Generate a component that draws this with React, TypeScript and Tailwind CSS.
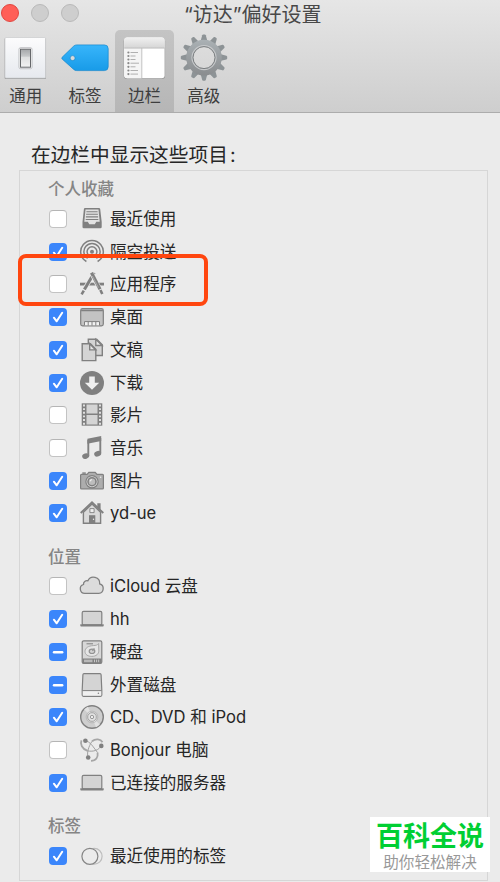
import React from "react";

type CheckState = "on" | "off" | "mixed";

interface Item {
  label: string;
  state: CheckState;
  icon: React.ReactNode;
}

const DARK = "#808080";
const LIGHT = "#d4d4d4";

function Icon({ children }: { children: React.ReactNode }) {
  return (
    <svg
      viewBox="0 0 24 24"
      className="ml-[13px] h-6 w-6 shrink-0 overflow-visible"
      fill="none"
      stroke={DARK}
      strokeWidth="1.2"
    >
      {children}
    </svg>
  );
}

const laptop = (
  <Icon>
    <rect x="2.2" y="4.3" width="19.6" height="13.5" rx="1.4" fill={LIGHT} />
    <path d="M.3 17.2h23.4v1.6q0 .8-.8.8H1.1q-.8 0-.8-.8z" fill={DARK} stroke="none" />
  </Icon>
);

const favorites: Item[] = [
  {
    label: "最近使用",
    state: "off",
    icon: (
      <Icon>
        <path d="M5.1 1h13.8q1.1 0 1.3 1.1l1.5 13V20q0 1.3-1.3 1.3H3.8q-1.3 0-1.3-1.3v-4.9L3.9 2.1Q4 1 5.1 1z" fill={DARK} stroke="none" />
        <path d="M5.5 2.4h13l1.2 12.4h-3.4l-1.5 2.5H9.3l-1.5-2.5H4.3z" fill="#e2e2e2" stroke="none" />
        <path d="M6.4 4.7h11.2M6.1 7.3h11.8M5.9 9.9h12.2M5.7 12.5h12.6" strokeWidth="1.1" />
      </Icon>
    ),
  },
  {
    label: "隔空投送",
    state: "on",
    icon: (
      <Icon>
        <circle cx="12" cy="11.7" r="2" fill={DARK} stroke="none" />
        <path d="M9.2 15.7a4.9 4.9 0 1 1 5.6 0M7.6 18.4a8.1 8.1 0 1 1 8.8 0M6.4 21.5a11.3 11.3 0 1 1 11.2 0" strokeWidth="1.5" />
      </Icon>
    ),
  },
  {
    label: "应用程序",
    state: "off",
    icon: (
      <Icon>
        <path d="M0 12.1h24" strokeWidth="2.8" />
        <path d="M14 .9 4.3 17.6" stroke="#ebebeb" strokeWidth="4.6" />
        <path d="M14.2.8 4.4 17.6" strokeWidth="3" />
        <path d="M3.8 18.6 1.6 22.4" strokeWidth="2.6" />
        <path d="m11.5 1 8.3 16.2" stroke="#ebebeb" strokeWidth="4.6" />
        <path d="M11.5.8 20 17.2" strokeWidth="3.2" />
        <path d="m20.4 18 1.9 4" strokeWidth="2.6" />
        <path d="m12.4 4 6 11.6" stroke="#b5b5b5" strokeWidth=".8" />
      </Icon>
    ),
  },
  {
    label: "桌面",
    state: "on",
    icon: (
      <Icon>
        <rect x=".7" y="3.7" width="22.6" height="17.2" rx="1.8" fill="#c3c3c3" />
        <path d="M1.1 5.5h21.8" strokeWidth="1.5" />
        <path d="M4.5 20.3v-3.7h15v3.7z" fill="#f1f1f1" stroke="none" />
        <path d="M4.5 20.3v-3.7h15v3.7M8.2 16.6v4M12 16.6v4M15.8 16.6v4" strokeWidth="1" />
      </Icon>
    ),
  },
  {
    label: "文稿",
    state: "on",
    icon: (
      <Icon>
        <path d="M8.3 17.5V1.2h8.4l5.6 5.5v10.8z" fill={LIGHT} strokeWidth="1.4" />
        <path d="M15.8 1.3v6.2h6.3z" fill="#e6e6e6" strokeWidth="1.4" />
        <path d="M2.2 22.6V5.7h8.2l5.4 5.5v11.4z" fill={LIGHT} strokeWidth="1.4" />
        <path d="M9.7 5.8v6.1h6z" fill="#e6e6e6" strokeWidth="1.4" />
      </Icon>
    ),
  },
  {
    label: "下载",
    state: "on",
    icon: (
      <Icon>
        <circle cx="12" cy="12" r="12" fill={DARK} stroke="none" />
        <path d="M9.2 5.5h5.6v6.2h4.4L12 18.8l-7.2-7.1h4.4z" fill="#efefef" stroke="none" />
      </Icon>
    ),
  },
  {
    label: "影片",
    state: "off",
    icon: (
      <Icon>
        <path d="M1.7.3h20.6v22.4H1.7z" fill={DARK} stroke="none" />
        <path d="M6.5 1.5h11v9h-11zM6.5 12h11v9.4h-11z" fill={LIGHT} stroke="none" />
        <path d="M4 1.5V22M20 1.5V22" stroke="#e4e4e4" strokeWidth="1.9" strokeDasharray="1.9 1.75" />
      </Icon>
    ),
  },
  {
    label: "音乐",
    state: "off",
    icon: (
      <Icon>
        <path d="M7.4 2.7 21.2 0v5L7.4 7.8z" fill={DARK} stroke="none" />
        <path d="M8.3 4v15.7M20.3 2v15.1" strokeWidth="1.9" />
        <ellipse cx="5.7" cy="20.1" rx="3.6" ry="2.7" transform="rotate(-20 5.7 20.1)" fill={DARK} stroke="none" />
        <ellipse cx="17.7" cy="17.7" rx="3.6" ry="2.7" transform="rotate(-20 17.7 17.7)" fill={DARK} stroke="none" />
      </Icon>
    ),
  },
  {
    label: "图片",
    state: "on",
    icon: (
      <Icon>
        <path d="M1.5 5.4h5.6l1.7-2.1h6.4l1.8 2.1h5.5q.9 0 .9.9v12.6q0 .9-.9.9h-21q-.9 0-.9-.9V6.3q0-.9.9-.9z" fill="#adadad" />
        <path d="M2.3 4.1h3.5" strokeWidth="1.5" />
        <circle cx="12" cy="12.7" r="6.1" fill="#dedede" />
        <circle cx="12" cy="12.7" r="4" fill="#bdbdbd" strokeWidth="1.6" />
        <path d="M10 12.4a2.2 2.2 0 0 1 2-1.8" stroke="#eee" />
        <circle cx="20.6" cy="8.2" r=".8" fill="#eee" stroke="none" />
      </Icon>
    ),
  },
  {
    label: "yd-ue",
    state: "on",
    icon: (
      <Icon>
        <path d="M3.4 11.2 12 3l8.6 8.2v11H3.4z" fill="#dadada" strokeWidth="1.4" />
        <path d="M17.3 2.3h3.3v7l-3.3-3.2z" fill={DARK} stroke="none" />
        <path d="M.7 12 12 1.4 23.3 12" strokeWidth="1.9" />
        <path d="M9.9 7.6h4.2v4H9.9z" fill="#efefef" strokeWidth=".9" />
        <path d="M9 14.2h6.3v8.4H9z" fill={DARK} stroke="none" />
        <circle cx="13.5" cy="18.3" r=".7" fill="#eee" stroke="none" />
      </Icon>
    ),
  },
];

const locations: Item[] = [
  {
    label: "iCloud 云盘",
    state: "off",
    icon: (
      <Icon>
        <path d="M5 19.3a4.5 4.5 0 0 1-1.5-8.8 3.5 3.5 0 0 1 4.4-3.7 6.2 6.2 0 0 1 11.8 3.1 4.8 4.8 0 0 1-.9 9.4z" fill="#dcdcdc" strokeWidth="1.3" />
      </Icon>
    ),
  },
  { label: "hh", state: "on", icon: laptop },
  {
    label: "硬盘",
    state: "mixed",
    icon: (
      <Icon>
        <rect x="2.2" y=".8" width="19.6" height="22.6" rx="1.5" fill="#d8d8d8" />
        <path d="M2.5 18.5h19v4.7h-19z" fill={DARK} stroke="none" />
        <path d="M4 19.6h8.5v2.6H4z" fill="#b9b9b9" stroke="none" />
        <path d="M14.5 19.6v2.6M16.6 19.6v2.6M18.7 19.6v2.6" stroke="#d0d0d0" strokeWidth=".9" />
        <path d="M6.5 3.8H13" strokeWidth="1" />
        <path d="M18.6 3.5C17.2 5.3 16 5.4 13.2 5.6 8.2 5.9 5 8 5 11.4c0 3.3 3 5 6.8 5 4.6 0 7.2-2.6 7-6.2z" fill="#e6e6e6" stroke="#a2a2a2" strokeWidth=".9" />
        <ellipse cx="12" cy="11.3" rx="2.8" ry="2.2" fill="#d2d2d2" stroke="#929292" />
        <path d="m12.4 11 2-2.6" stroke="#929292" />
      </Icon>
    ),
  },
  {
    label: "外置磁盘",
    state: "mixed",
    icon: (
      <Icon>
        <path d="M4 .7h16q1 0 1.1 1.1l.7 15.5v4.8q0 1.2-1.2 1.2H3.4q-1.2 0-1.2-1.2v-4.8L2.9 1.8Q3 .7 4 .7z" fill={LIGHT} />
        <path d="M2.8 17.8h18.4v4.8H2.8z" fill="#f0f0f0" stroke="none" />
        <path d="M2.3 17.6h19.4" strokeWidth="1" />
        <circle cx="18.4" cy="20.3" r=".8" fill={DARK} stroke="none" />
      </Icon>
    ),
  },
  {
    label: "CD、DVD 和 iPod",
    state: "on",
    icon: (
      <Icon>
        <circle cx="12" cy="12" r="11.3" fill="#cecece" strokeWidth="1.4" />
        <path d="M12 12 4.2 4.5A11 11 0 0 1 8 1.8zM12 12l7.8 7.5a11 11 0 0 1-3.8 2.7z" fill="#e2e2e2" stroke="none" />
        <circle cx="12" cy="12" r="5.9" stroke="#b5b5b5" strokeWidth=".8" />
        <circle cx="12" cy="12" r="4.3" fill="#e3e3e3" stroke="#a2a2a2" strokeWidth=".9" />
        <circle cx="12" cy="12" r="1.7" fill="#ececec" stroke="#8e8e8e" strokeWidth=".9" />
      </Icon>
    ),
  },
  {
    label: "Bonjour 电脑",
    state: "off",
    icon: (
      <Icon>
        <g stroke="#a6a6a6" strokeWidth="1.8">
          <path d="M1.5 2.3C-.2 6 2 10.8 7.6 12.9" />
          <path d="M12 3.3c3.5-3 8.7-2.3 10.5.9" />
          <path d="M17.6 14.6c.7 4.6-1.7 8.3-6.6 8.3" />
        </g>
        <path
          d="M5.4 2.8C10 3.5 12.5 8 17.6 14.6M21.3 7.7c-2.6 4.6-7.8 6.2-13.7 5.2M8.2 19.5C6.5 15.5 8.5 8.5 12 3.3"
          stroke="#a0a0a0"
          strokeWidth="1"
        />
        <circle cx="5.4" cy="2.8" r="2.3" fill={DARK} stroke="none" />
        <circle cx="21.3" cy="7.9" r="2.3" fill={DARK} stroke="none" />
        <circle cx="8.2" cy="19.5" r="2.3" fill={DARK} stroke="none" />
      </Icon>
    ),
  },
  { label: "已连接的服务器", state: "on", icon: laptop },
];

const tags: Item[] = [
  {
    label: "最近使用的标签",
    state: "on",
    icon: (
      <Icon>
        <circle cx="14.2" cy="12.3" r="7.9" stroke="#bdbdbd" />
        <circle cx="9.9" cy="12.3" r="8" fill="#ebebeb" stroke="#858585" />
      </Icon>
    ),
  },
];

function Checkbox({ state }: { state: CheckState }) {
  if (state === "off") {
    return <span className="h-[18px] w-[18px] shrink-0 rounded-[4px] border border-[#c3c3c3] border-t-[#b5b5b5] bg-white" />;
  }
  return (
    <span className="h-[18px] w-[18px] shrink-0 rounded-[4px] bg-[#3b86fb]">
      <svg viewBox="0 0 18 18" className="h-full w-full" fill="none" stroke="white" strokeLinecap="round" strokeLinejoin="round">
        {state === "on" ? (
          <path d="m4.9 9.7 2.8 3.6 5.5-8.5" strokeWidth="2" />
        ) : (
          <path d="M5 9.2h8.2" strokeWidth="2.4" />
        )}
      </svg>
    </span>
  );
}

function Section({ title, items }: { title: string; items: Item[] }) {
  return (
    <section className="mb-[13px]">
      <h2 className="-ml-px h-[27.3px] text-[16.5px] leading-[28px] font-medium text-[#858585]">{title}</h2>
      {items.map((item) => (
        <div key={item.label} className="flex h-[32.72px] items-center">
          <Checkbox state={item.state} />
          {item.icon}
          <span className="ml-1.5 text-[16.6px] leading-6 whitespace-nowrap text-[#262626]">{item.label}</span>
        </div>
      ))}
    </section>
  );
}

function SwitchIcon() {
  return (
    <svg viewBox="0 0 48 48" className="h-12 w-12">
      <defs>
        <linearGradient id="plate" x2="0" y2="1">
          <stop stopColor="#fcfcfd" />
          <stop offset="1" stopColor="#e6e9ee" />
        </linearGradient>
        <linearGradient id="rocker" x2="0" y2="1">
          <stop stopColor="#a5a7aa" />
          <stop offset=".4" stopColor="#c6c8ca" />
          <stop offset=".42" stopColor="#dddedf" />
          <stop offset="1" stopColor="#f2f2f3" />
        </linearGradient>
      </defs>
      <rect x="2.6" y="4" width="41.4" height="41" rx="1" fill="#9c9c9e" />
      <rect x="3" y="3.5" width="40.6" height="40.6" rx="1" fill="url(#plate)" stroke="#c9cacc" strokeWidth=".7" />
      <rect x="17" y="13.7" width="13" height="21" rx="1.5" fill="#fff" stroke="#a7a9ad" strokeWidth=".7" />
      <rect x="18.5" y="15.2" width="10" height="18" fill="url(#rocker)" stroke="#66686b" strokeWidth="1" />
    </svg>
  );
}

function TagIcon() {
  return (
    <svg viewBox="0 0 48 48" className="h-12 w-12">
      <defs>
        <linearGradient id="tag" x2="0" y2="1">
          <stop stopColor="#38b5fb" />
          <stop offset="1" stopColor="#189be8" />
        </linearGradient>
      </defs>
      <path
        fillRule="evenodd"
        d="M1.1 23.3 12.7 12.1q1.3-1.2 3.1-1.2h27.6q3.8 0 3.8 3.8v18.1q0 3.8-3.8 3.8H15.8q-1.8 0-3.1-1.2L1.1 25q-.7-.8 0-1.7zm8 .8a2.5 2.5 0 1 0 5 0 2.5 2.5 0 0 0-5 0z"
        fill="url(#tag)"
        stroke="#1688ce"
        strokeWidth=".7"
      />
    </svg>
  );
}

function SidebarIcon() {
  return (
    <svg viewBox="0 0 48 48" className="h-12 w-12">
      <defs>
        <linearGradient id="bar" x2="0" y2="1">
          <stop stopColor="#f0f0f0" />
          <stop offset="1" stopColor="#d5d5d5" />
        </linearGradient>
      </defs>
      <rect x="3.7" y="4.3" width="41.4" height="40.8" rx="3" fill="#999" />
      <rect x="4.2" y="3.6" width="40.4" height="40.6" rx="3" fill="#fff" />
      <path d="M4.2 13.6h17.4v30.6H7.2q-3 0-3-3z" fill="#f5f5f5" />
      <path d="M7.2 3.6h34.4q3 0 3 3v7.5H4.2V6.6q0-3 3-3z" fill="url(#bar)" />
      <path d="M4.2 14.1h40.4M21.8 14.1v30.1" stroke="#b4b4b4" strokeWidth=".8" />
      {[18.5, 22, 25.5, 29.2, 32.8, 36.5, 40.1].map((y, i) => (
        <g key={y}>
          <circle cx="8.4" cy={y} r="1.1" fill="#888" />
          <path d={`M10.5 ${y}h${[7.5, 5, 5, 8.5, 5, 7.5, 7.5][i]}`} stroke="#a8a8a8" strokeWidth=".9" />
        </g>
      ))}
    </svg>
  );
}

function GearIcon() {
  return (
    <svg viewBox="0 0 48 48" className="h-12 w-12">
      <defs>
        <linearGradient id="gear" gradientUnits="userSpaceOnUse" x1="0" y1="0" x2="0" y2="48">
          <stop stopColor="#b0b7bb" />
          <stop offset=".5" stopColor="#999ea1" />
          <stop offset="1" stopColor="#858789" />
        </linearGradient>
      </defs>
      <g transform="translate(0 -.4)">
        {Array.from({ length: 12 }, (_, i) => (
          <path key={i} d="M20.5 8 22.2 1.6q.3-.8 1-.8h1.6q.7 0 1 .8L27.5 8z" transform={`rotate(${i * 30} 24 24)`} fill="#8d9396" />
        ))}
        <circle cx="24" cy="24" r="14.5" fill="none" stroke="url(#gear)" strokeWidth="6.6" />
        <circle cx="24" cy="24" r="12" fill="none" stroke="#c7c9cb" strokeWidth="1.2" />
        <circle cx="24" cy="24" r="11" fill="none" stroke="#7a7e80" strokeWidth="1" />
      </g>
    </svg>
  );
}

const tabs = [
  { label: "通用", icon: <SwitchIcon /> },
  { label: "标签", icon: <TagIcon /> },
  { label: "边栏", icon: <SidebarIcon />, active: true },
  { label: "高级", icon: <GearIcon /> },
];

export default function App() {
  return (
    <div className="relative flex h-[882px] w-[500px] flex-col overflow-hidden bg-[#ebebeb] font-[Inter,'Noto_Sans_CJK_SC',sans-serif]">
      <header className="h-[113px] shrink-0 border-b border-[#acacac] bg-linear-to-b from-[#e6e6e6] to-[#cecece]">
        <div className="flex h-[30px] items-start">
          <div className="mt-[4px] ml-[1px] flex w-[183px] gap-3">
            <span className="h-[18px] w-[18px] rounded-full border border-[#e2463f] bg-[#ff5f57]" />
            <span className="h-[18px] w-[18px] rounded-full border border-[#b9b9b9] bg-[#cecece]" />
            <span className="h-[18px] w-[18px] rounded-full border border-[#b9b9b9] bg-[#cecece]" />
          </div>
          <h1 className="mt-px text-[20px] leading-7 whitespace-nowrap text-[#484848]">“访达”偏好设置</h1>
        </div>
        <nav className="-ml-[4px] flex h-[82px]">
          {tabs.map((tab) => (
            <button
              key={tab.label}
              className={`flex w-[59.4px] flex-col items-center rounded-t-[5px] pt-[4px] ${tab.active ? "bg-linear-to-b from-[#c4c4c4] to-[#b6b6b6]" : ""}`}
            >
              {tab.icon}
              <span className="mt-0.5 text-[16.5px] leading-6 text-[#3e3e3e]">{tab.label}</span>
            </button>
          ))}
        </nav>
      </header>

      <main className="pt-[27px] pl-[19px]">
        <p className="pt-px pl-[12px] text-[19.7px] leading-[29px] text-[#262626]">
          在边栏中显示这些项目<span className="ml-0.5">:</span>
        </p>
        <div className="h-[711px] w-[469px] border-[1.5px] border-[#d6d6d6] pt-[4.3px] pl-[29px]">
          <Section title="个人收藏" items={favorites} />
          <Section title="位置" items={locations} />
          <Section title="标签" items={tags} />
        </div>
      </main>

      {/* highlight around the applications row */}
      <div className="absolute top-[254px] left-[18px] h-[52px] w-[190px] rounded-[8px] border-[4.5px] border-[#ff460f]" />

      <div className="absolute top-[817px] left-[370px] flex h-[55px] w-[120px] flex-col items-center bg-white">
        <span className="mt-[3px] text-[27px] leading-[34px] font-bold text-[#00cf33]">百科全说</span>
        <span className="text-[15.6px] leading-[17px] text-[#999]">助你轻松解决</span>
      </div>
    </div>
  );
}
